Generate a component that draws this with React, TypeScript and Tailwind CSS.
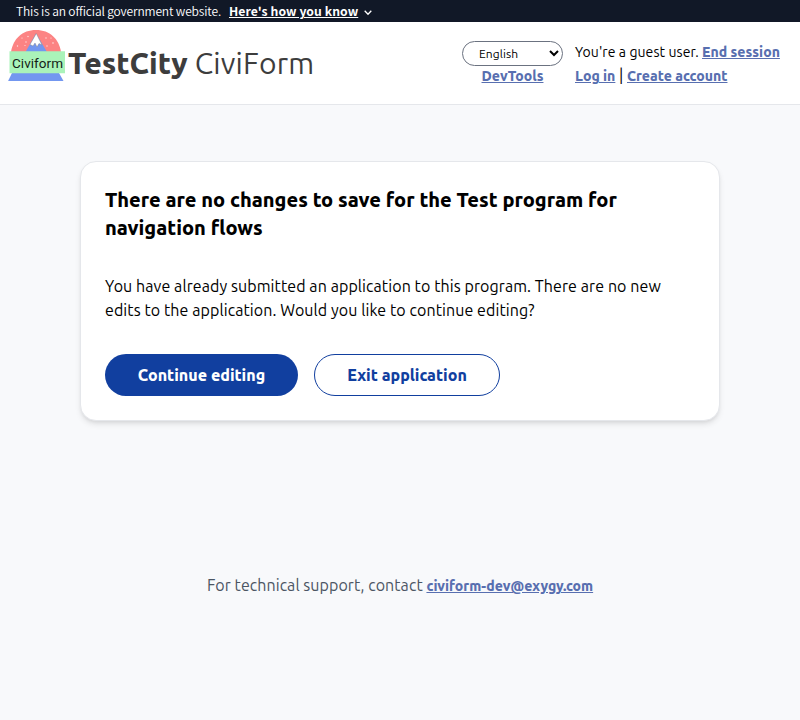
import type { ReactNode } from 'react';

function Link({ children, className = '' }: { children: ReactNode; className?: string }) {
  return (
    <a href="#" className={`text-[14px] font-extrabold tracking-normal text-[#586fb0] underline ${className}`}>
      {children}
    </a>
  );
}

function Logo() {
  return (
    <svg width="58" height="52" viewBox="0 0 58 52" className="shrink-0">
      <path d="M3 22C5 9 14 0 28 0s23 9 25 22z" fill="#fc8383" />
      <path d="M17.500 22 28 3.500 39 22z" fill="#7397f0" />
      <path d="M28.300 3.500 22 14.500l3 1.500 2-3 2 4 2-3.500 3 1.500z" fill="#fff" stroke="#777" strokeWidth=".4" />
      <g fill="#ffe1e1">
        <circle cx="20" cy="6.500" r=".7" />
        <circle cx="14" cy="8" r=".6" />
        <circle cx="18" cy="12" r=".7" />
        <circle cx="9.500" cy="16" r=".7" />
        <circle cx="17" cy="15.500" r=".6" />
        <circle cx="38" cy="8" r=".7" />
        <circle cx="43" cy="8" r=".6" />
        <circle cx="45" cy="13" r=".8" />
        <circle cx="39" cy="16" r=".7" />
      </g>
      <path d="M4 43h47l4.500 8H.1z" fill="#7397f0" />
      <path d="M1.500 21.200H57v22H1.500z" fill="#aaf3b9" />
      <text x="4" y="38" fontSize="13.500" textLength="51" fill="#151c18" fontFamily="Roboto, sans-serif">
        Civiform
      </text>
    </svg>
  );
}

export default function App() {
  return (
    <div className="flex min-h-screen flex-col bg-[#f8f9fb] font-[Ubuntu,'Noto_Sans',sans-serif] text-base font-[450] text-black">
      <div className="flex h-[22px] items-center bg-[#111827] px-4 font-['Noto_Sans_CJK_SC',sans-serif] text-white">
        <span className="text-[12px] leading-[22px] font-[350] tracking-[-0.14px]">This is an official government website.</span>
        <a href="#" className="ml-2 text-[12.2px] leading-[22px] font-bold tracking-[0.07px] underline">
          Here's how you know
        </a>
        <svg width="8" height="6" viewBox="0 0 8 6" className="mt-1 ml-1.5" fill="none" stroke="#fff" strokeWidth="1.3">
          <path d="m.7.800 3.300 3.400L7.300.800" />
        </svg>
      </div>

      <header className="flex h-[83px] items-start border-b border-[#e5e7eb] bg-white pt-2 pr-5 pl-2">
        <Logo />
        <h1 className="ml-0.5 flex gap-[7px] pt-[11px] text-[30px] leading-[45px] text-[#3d3d3d]">
          <span className="font-extrabold">TestCity</span>
          <span className="font-[450] tracking-[0.2px]">CiviForm</span>
        </h1>
        <div className="ml-auto flex flex-col items-center pt-[11px]">
          <select className="h-[25px] w-[101px] rounded-full border border-[#6b7280] bg-white px-3 text-[12px] tracking-[0.1px] text-black">
            <option>English</option>
          </select>
          <Link className="leading-[21px]">DevTools</Link>
        </div>
        <div className="ml-3 w-[205px] pt-[10px] text-[14px] leading-6 whitespace-nowrap">
          <p className="tracking-[0.08px]">
            You're a guest user. <Link>End session</Link>
          </p>
          <p className="-mt-px">
            <Link>Log in</Link>
            <span className="text-base"> | </span>
            <Link>Create account</Link>
          </p>
        </div>
      </header>

      <main className="mx-auto mt-14 w-[640px] rounded-2xl border border-[#e5e7eb] bg-white p-6 shadow-md">
        <h2 className="text-xl leading-7 font-extrabold">There are no changes to save for the Test program for navigation flows</h2>
        <p className="mt-8 pr-4 leading-6 tracking-[0.083px]">
          You have already submitted an application to this program. There are no new edits to the application. Would you
          like to continue editing?
        </p>
        <div className="mt-8 flex gap-4">
          <button className="h-[42px] w-[193px] rounded-full bg-[#113f9f] font-extrabold text-white">Continue editing</button>
          <button className="h-[42px] w-[186px] rounded-full border border-[#113f9f] font-extrabold text-[#113f9f]">
            Exit application
          </button>
        </div>
      </main>

      <footer className="mt-[152px] text-center leading-6 tracking-[0.06px] text-[#4b5563]">
        For technical support, contact <Link>civiform-dev@exygy.com</Link>
      </footer>
    </div>
  );
}
